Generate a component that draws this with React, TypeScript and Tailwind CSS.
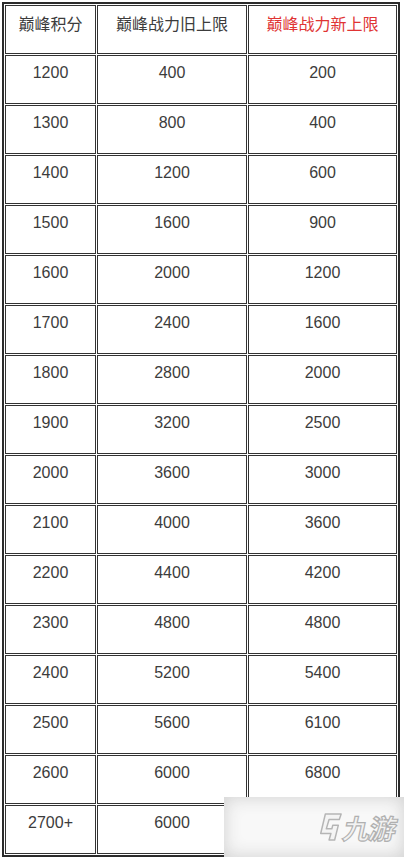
import React from 'react';

const rows: [string, string, string][] = [
  ['1200', '400', '200'],
  ['1300', '800', '400'],
  ['1400', '1200', '600'],
  ['1500', '1600', '900'],
  ['1600', '2000', '1200'],
  ['1700', '2400', '1600'],
  ['1800', '2800', '2000'],
  ['1900', '3200', '2500'],
  ['2000', '3600', '3000'],
  ['2100', '4000', '3600'],
  ['2200', '4400', '4200'],
  ['2300', '4800', '4800'],
  ['2400', '5200', '5400'],
  ['2500', '5600', '6100'],
  ['2600', '6000', '6800'],
  ['2700+', '6000', '6800'],
];

const cell = 'border border-[#333] text-center pt-[5px] leading-6 text-[16px]';

const Watermark = () => (
  <div className="absolute left-[224px] top-[797px] w-[180px] h-[60px] bg-[#f8f8f8] shadow-[inset_0_0_18px_#cfcfcf] flex items-center justify-end pr-[8px] gap-[1px]">
    {/* stylised logo mark */}
    <svg width="26" height="34" viewBox="0 0 28 34">
      <path
        d="M9 3 L26 3 L24 9 L13 9 L10 19 L16 19 L17 15 L23 15 L19 31 L13 31 L15 24 L4 24 Z"
        fill="#f4f4f4"
        stroke="#b5b5b5"
        strokeWidth="1.6"
        strokeLinejoin="round"
      />
    </svg>
    <span
      className="text-[27px] leading-none font-bold text-[#f2f2f2] -skew-x-12 tracking-[-1px]"
      style={{ WebkitTextStroke: '1.2px #b0b0b0', fontFamily: '"Noto Sans CJK SC", sans-serif' }}
    >
      九游
    </span>
  </div>
);

export default function App() {
  return (
    <div className="relative w-[404px] h-[857px] bg-white overflow-hidden font-['Liberation_Sans','Noto_Sans_CJK_SC',sans-serif] text-[#3c3c3c]">
      <div className="mt-[2px] ml-[2px] w-fit border-2 border-[#2b2b2b] p-px">
        <div className="grid grid-cols-[91px_150px_149px] auto-rows-[49px] gap-px">
          <div className={`${cell} font-['Noto_Sans_CJK_SC',sans-serif]`}>巅峰积分</div>
          <div className={`${cell} font-['Noto_Sans_CJK_SC',sans-serif]`}>巅峰战力旧上限</div>
          <div className={`${cell} font-['Noto_Sans_CJK_SC',sans-serif] text-[#e03434]`}>巅峰战力新上限</div>
          {rows.map(([a, b, c]) => (
            <React.Fragment key={a}>
              <div className={cell}>{a}</div>
              <div className={cell}>{b}</div>
              <div className={cell}>{c}</div>
            </React.Fragment>
          ))}
        </div>
      </div>
      <Watermark />
    </div>
  );
}
